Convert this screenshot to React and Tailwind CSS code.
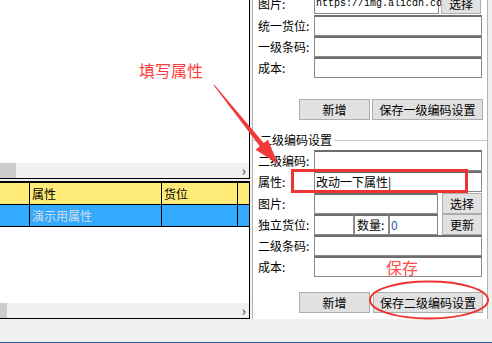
const font = { fontFamily: '"Noto Sans CJK SC", "Liberation Sans", sans-serif' };

function Field({ label, children, className = "" }) {
  return (
    <div className={`flex h-[21px] items-center ${className}`}>
      <div className="w-[60px] shrink-0 pl-[4px] text-[12px] leading-none text-black">{label}</div>
      {children}
    </div>
  );
}

function Input({ className = "w-[168px]", children }) {
  return (
    <div className={`flex h-[21px] items-center border border-[#8a8a8a] border-t-2 border-t-[#6e6e6e] bg-white px-[1px] ${className}`}>
      {children}
    </div>
  );
}

function Btn({ children, className = "" }) {
  return (
    <div className={`flex h-[21px] items-center justify-center border border-[#adadad] bg-[#e1e1e1] text-[12px] leading-none text-black ${className}`}>
      {children}
    </div>
  );
}

function Scroll({ thumb }) {
  return (
    <div className="flex h-[15px] items-center justify-between bg-[#f0f0f0]">
      <div className={`h-full bg-[#cdcdcd] ${thumb}`} />
      <span className="pr-[3px] text-[13px] font-bold leading-none text-[#606060]">›</span>
    </div>
  );
}

export default function App() {
  return (
    <div className="relative flex h-[343px] w-[492px] flex-col overflow-hidden bg-[#f0f0f0]" style={font}>
      <div className="flex h-[319px]">
        {/* left grids */}
        <div className="flex w-[250px] flex-col">
          <div className="flex h-[179px] flex-col border-b border-r border-black bg-white">
            <div className="flex-1" />
            <Scroll thumb="w-[16px]" />
          </div>
          <div className="mt-[2px] flex flex-1 flex-col border-b border-r border-t-2 border-black bg-white">
            <div className="flex h-[22px] border-b border-black bg-[#ffeb78] text-[12px] leading-none text-black">
              <div className="w-[30px] border-r border-black" />
              <div className="flex w-[132px] items-center border-r border-black pl-[2px]">属性</div>
              <div className="flex w-[76px] items-center border-r border-black pl-[2px]">货位</div>
              <div className="flex-1" />
            </div>
            <div className="flex h-[22px] border-b border-black bg-[#33aaff] text-[12px] leading-none text-[#d2dce6]">
              <div className="w-[30px] border-r border-black" />
              <div className="flex w-[132px] items-center border-r border-black pl-[2px]">演示用属性</div>
              <div className="w-[76px] border-r border-black" />
              <div className="flex-1" />
            </div>
            <div className="flex-1" />
            <Scroll thumb="w-[7px]" />
          </div>
        </div>

        {/* right editor */}
        <div className="ml-[2px] flex w-[236px] flex-col border-l border-r border-[#b4b4b4] bg-white">
          <div className="-mt-[7px] flex h-[136px] flex-col pl-[1px]">
            <Field label="图片:">
              <Input className="w-[125px]">
                <span className="whitespace-nowrap text-[10px] leading-none text-black" style={{ fontFamily: '"Liberation Mono", monospace' }}>
                  https://img.alicdn.co
                </span>
              </Input>
              <Btn className="ml-[2px] w-[40px]">选择</Btn>
            </Field>
            <Field label="统一货位:" className="mt-[1px]"><Input /></Field>
            <Field label="一级条码:"><Input /></Field>
            <Field label="成本:"><Input /></Field>
            <div className="mt-[21px] flex gap-[2px] pl-[45px]">
              <Btn className="w-[71px]">新增</Btn>
              <Btn className="w-[111px]">保存一级编码设置</Btn>
            </div>
          </div>

          <fieldset className="mt-[5px] flex flex-1 flex-col border-t border-[#c8c8c8] pl-[1px]">
            <legend className="ml-[4px] px-[2px] text-[12px] leading-none text-black">二级编码设置</legend>
            <div className="mt-[4px]">
              <Field label="二级编码:"><Input /></Field>
              <Field label="属性:">
                <Input>
                  <span className="text-[12px] leading-none text-black">改动一下属性|</span>
                </Input>
              </Field>
              <Field label="图片:" className="mt-[1px]">
                <Input className="w-[124px]" />
                <Btn className="ml-[4px] w-[40px]">选择</Btn>
              </Field>
              <Field label="独立货位:">
                <Input className="w-[40px]" />
                <div className="flex h-[21px] w-[35px] items-center border border-[#8a8a8a] border-t-2 border-t-[#6e6e6e] pl-[2px] text-[12px] leading-none text-black">数量:</div>
                <Input className="w-[49px]">
                  <span className="text-[12px] leading-none text-[#1f5fb0]">0</span>
                </Input>
                <Btn className="ml-[4px] w-[40px]">更新</Btn>
              </Field>
              <Field label="二级条码:"><Input /></Field>
              <Field label="成本:"><Input /></Field>
            </div>
            <div className="mt-[15px] flex gap-[3px] pl-[45px]">
              <Btn className="w-[71px]">新增</Btn>
              <Btn className="w-[110px]">保存二级编码设置</Btn>
            </div>
          </fieldset>
        </div>
      </div>
      <div className="flex-1" />
      <div className="h-[1px] bg-[#2c5aa0]" />

      {/* annotations */}
      <div className="pointer-events-none absolute left-[139px] top-[62px] text-[16px] leading-none text-[#ff3b3b]">填写属性</div>
      <div className="pointer-events-none absolute left-[386px] top-[259px] text-[16px] leading-none text-[#ff4a4a]">保存</div>
      <div className="pointer-events-none absolute left-[291px] top-[169px] h-[24px] w-[177px] border-[3px] border-[#ee3333]" />
      <svg className="pointer-events-none absolute left-0 top-0" width="492" height="343">
        <polygon
          points="213.6,85.3 214.4,84.7 263.7,143.1 268,139.7 278,164 255.5,149.7 259.8,146.3"
          fill="#f03a3a"
        />
        <ellipse cx="429" cy="300" rx="59" ry="18.5" fill="none" stroke="#ee3333" strokeWidth="2" />
      </svg>
    </div>
  );
}
